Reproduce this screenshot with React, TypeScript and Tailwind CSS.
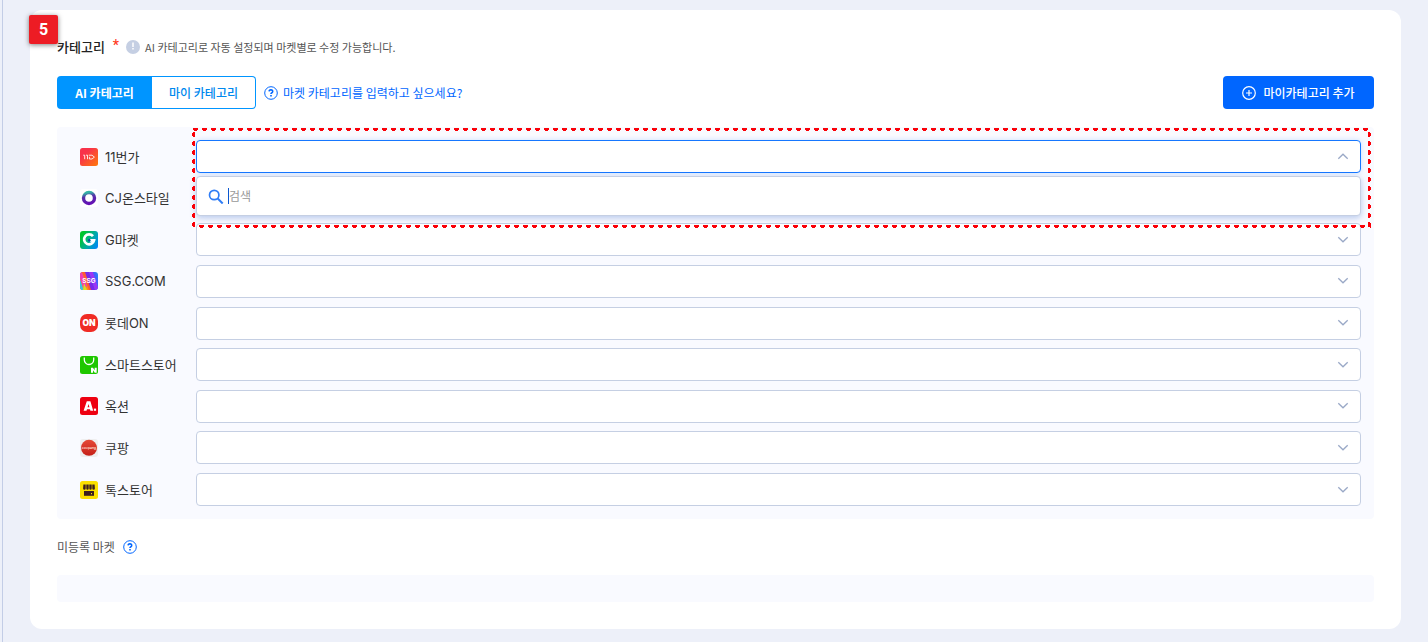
import type { ReactNode } from 'react';

type Market = {
  id: string;
  name: string;
  icon: ReactNode;
};

const markets: Market[] = [
  {
    id: '11st',
    name: '11번가',
    icon: (
      <>
        <defs>
          <linearGradient id="g-11st" x1="0" y1="0" x2="1" y2="1">
            <stop offset="0.3" stopColor="#f8324a" />
            <stop offset="1" stopColor="#ff7a0a" />
          </linearGradient>
        </defs>
        <rect width="18" height="18" rx="2.5" fill="url(#g-11st)" />
        <path d="M3.2 7.2h1.5v4M6 7.2h1.5v4M8.8 7.2h3.2l2.4 1.9L12 11H9.4V8.8" fill="none" stroke="#fff" strokeOpacity="0.85" />
      </>
    ),
  },
  {
    id: 'cj',
    name: 'CJ온스타일',
    icon: (
      <>
        <defs>
          <linearGradient id="g-cj" x1="0.4" y1="0" x2="0.6" y2="1">
            <stop offset="0" stopColor="#35b5a5" />
            <stop offset="0.35" stopColor="#5535a8" />
            <stop offset="1" stopColor="#6510b5" />
          </linearGradient>
        </defs>
        <rect width="18" height="18" rx="3" fill="#fff" />
        <circle cx="9" cy="9" r="5.5" fill="none" stroke="url(#g-cj)" strokeWidth="3.4" />
      </>
    ),
  },
  {
    id: 'gmarket',
    name: 'G마켓',
    icon: (
      <>
        <defs>
          <linearGradient id="g-gm" x1="0" y1="0.2" x2="1" y2="0.8">
            <stop offset="0.1" stopColor="#00c62b" />
            <stop offset="0.6" stopColor="#00a9a8" />
            <stop offset="1" stopColor="#0088f5" />
          </linearGradient>
        </defs>
        <rect width="18" height="18" rx="3" fill="url(#g-gm)" />
        <path d="M13 5.2A5 5 0 1 0 14 9.4H10" fill="none" stroke="#fff" strokeWidth="2.7" />
        <circle cx="9.3" cy="9.2" r="1.3" fill="#0a4ea0" />
      </>
    ),
  },
  {
    id: 'ssg',
    name: 'SSG.COM',
    icon: (
      <>
        <defs>
          <clipPath id="c-ssg">
            <rect width="18" height="18" rx="3" />
          </clipPath>
        </defs>
        <g clipPath="url(#c-ssg)">
          <rect width="18" height="18" fill="#2b7bf5" />
          <path d="M0 0h5l6 18H0z" fill="#ff8b20" />
          <path d="M0 7l3.5 11H0z" fill="#35c5e8" />
          <path d="M0 0h2l5 14-3 4L0 6z" fill="#f03bb5" />
          <path d="M4 11l3 7H3z" fill="#d8e020" />
          <path d="M2 0h4l6 18H9z" fill="#ff5a30" />
          <path d="M5 0h4l6 18h-4z" fill="#7b28e8" />
          <path d="M9 0h4l5 15v3h-3z" fill="#9a35f5" />
          <path d="M13 0h2l3 9v6z" fill="#4060ff" />
        </g>
        <text x="9" y="11.3" textAnchor="middle" fontSize="6.5" fontWeight="700" fill="#fff" fontFamily="Inter, sans-serif">SSG</text>
      </>
    ),
  },
  {
    id: 'lotteon',
    name: '롯데ON',
    icon: (
      <>
        <rect width="18" height="18" rx="7" fill="#f02b25" />
        <text x="9" y="12" textAnchor="middle" fontSize="8.5" fontWeight="900" fill="#fff" fontFamily="Inter, sans-serif">ON</text>
      </>
    ),
  },
  {
    id: 'smartstore',
    name: '스마트스토어',
    icon: (
      <>
        <rect width="18" height="18" rx="2.5" fill="#1fc700" />
        <path d="M4.3 1.5v2.3a4.7 4.7 0 0 0 9.4 0V1.5" fill="none" stroke="#fff" strokeWidth="1.3" />
        <path d="M11 16.8v-5h1.9l1.8 2.5v-2.5h2v5h-1.9L13 14.3v2.5z" fill="#fff" />
      </>
    ),
  },
  {
    id: 'auction',
    name: '옥션',
    icon: (
      <>
        <rect width="18" height="18" rx="2.5" fill="#ee0011" />
        <path d="M6.8 4.2h3.6l2.8 9.6h-2.8l-.4-1.5H7l-.5 1.5H3.6zM8.5 7l-.9 3.2h1.8z" fill="#fff" fillRule="evenodd" />
        <rect x="13.9" y="11.6" width="2.2" height="2.2" fill="#fff" />
      </>
    ),
  },
  {
    id: 'coupang',
    name: '쿠팡',
    icon: (
      <>
        <defs>
          <linearGradient id="g-cp" x1="0" y1="0" x2="0" y2="1">
            <stop offset="0" stopColor="#e54a38" />
            <stop offset="1" stopColor="#c51f18" />
          </linearGradient>
        </defs>
        <rect width="18" height="18" rx="3" fill="#eeeeef" />
        <circle cx="9" cy="8.8" r="8" fill="url(#g-cp)" />
        <text x="9" y="10" textAnchor="middle" fontSize="3.4" fontWeight="600" fill="#ffd8d0" fontFamily="Inter, sans-serif">coupang</text>
      </>
    ),
  },
  {
    id: 'talkstore',
    name: '톡스토어',
    icon: (
      <>
        <rect width="18" height="18" rx="2.5" fill="#fbe000" />
        <path d="M3.4 3.5h2.3v4a1.3 1.3 0 0 1-2.6 0zM6.3 3.5h2.4v4a1.2 1.2 0 0 1-2.4 0zM9.3 3.5h2.4v4a1.2 1.2 0 0 1-2.4 0zM12.3 3.5h2.3l.3 4a1.3 1.3 0 0 1-2.6 0z" fill="#3b1f1f" />
        <path d="M4 10h10v4.8H4z" fill="#3b1f1f" />
        <path d="M11 12h1v1.2h-1z" fill="#fbe000" />
      </>
    ),
  },
];

function QuestionIcon() {
  return (
    <svg className="size-[14px] shrink-0" viewBox="0 0 14 14" fill="none" stroke="#0066ff" aria-hidden="true">
      <circle cx="7" cy="7" r="6.3" strokeWidth="1" />
      <path d="M5.1 5.4a1.8 1.6 0 1 1 2.8 1.4c-.6.4-.9.5-.9 1.2" strokeWidth="1.6" />
      <path d="M7 9v1.6" strokeWidth="1.6" />
    </svg>
  );
}

function Chevron({ up }: { up?: boolean }) {
  return (
    <svg
      className="pointer-events-none absolute right-3 top-1/2 size-3 -translate-y-1/2"
      viewBox="0 0 12 12"
      fill="none"
      stroke="#9aa9c7"
      strokeWidth="1.3"
      aria-hidden="true"
    >
      <path d={up ? 'M1.3 7.8L6 3.2l4.7 4.6' : 'M1.3 3.2L6 7.8l4.7-4.6'} />
    </svg>
  );
}

function SearchMenu() {
  return (
    <div className="absolute inset-x-0 top-[36px] z-10 flex h-10 items-center rounded border border-[#c5cfe3] bg-white pl-[11px] pr-3 shadow-[0_2px_6px_rgba(60,110,200,0.35)]">
      <svg className="size-4 shrink-0" viewBox="0 0 16 16" fill="none" stroke="#2f7df6" aria-hidden="true">
        <circle cx="6.2" cy="7" r="4.7" strokeWidth="1.7" />
        <path d="M9.7 10.5l5 5" strokeWidth="2" />
      </svg>
      <span className="ml-1 h-4 w-px bg-[#0b57d0]" />
      <input
        type="text"
        aria-label="검색"
        placeholder="검색"
        className="min-w-0 flex-1 bg-transparent text-xs leading-5 outline-none placeholder:text-[#999]"
      />
    </div>
  );
}

// guide marker drawn around the opened field
function Highlight() {
  return (
    <svg className="pointer-events-none absolute -left-1 -top-3 z-20 h-[100px] w-[calc(100%+14px)]" fill="none" stroke="#fa0008" aria-hidden="true">
      <g strokeWidth="2" strokeDasharray="5 4">
        <line x1="1" y1="1" x2="100%" y2="1" />
        <line x1="7" y1="98" x2="100%" y2="98" />
        <line x1="2" y1="4" x2="2" y2="100%" />
        <svg x="100%" overflow="visible">
          <line x1="-2" y1="4" x2="-2" y2="100" />
        </svg>
      </g>
      <g strokeWidth="1" strokeDasharray="3 6">
        <line x1="2" y1="2.5" x2="100%" y2="2.5" />
        <line x1="8" y1="99.5" x2="100%" y2="99.5" />
        <line x1="0.5" y1="5" x2="0.5" y2="100%" />
        <svg x="100%" overflow="visible">
          <line x1="-0.5" y1="5" x2="-0.5" y2="100" />
        </svg>
      </g>
    </svg>
  );
}

function MarketRow({ market, open }: { market: Market; open: boolean }) {
  return (
    <li className="flex items-center">
      <label htmlFor={market.id} className="flex w-[116px] shrink-0 items-center gap-[7px] font-[Inter,'Noto_Sans_CJK_KR',sans-serif] text-[13px] leading-5 text-[#333]">
        <svg className="size-[18px] shrink-0" viewBox="0 0 18 18" aria-hidden="true">
          {market.icon}
        </svg>
        {market.name}
      </label>
      <div className="relative min-w-0 flex-1">
        <select
          id={market.id}
          className={
            open
              ? 'block h-[33px] w-full appearance-none rounded border border-[#1677ff] bg-white px-3 shadow-[0_0_5px_rgba(22,119,255,0.2)] outline-none'
              : 'block h-[33px] w-full appearance-none rounded border border-[#c5cfe3] bg-white px-3 outline-none'
          }
        />
        <Chevron up={open} />
        {open && <SearchMenu />}
        {open && <Highlight />}
      </div>
    </li>
  );
}

export default function App() {
  return (
    <div className="min-h-screen bg-[#edf0f9] pl-[2px] font-['Noto_Sans_CJK_KR',sans-serif]">
      <main className="min-h-screen border-l border-[#c3cde6] px-[27px] pb-3 pt-[10px]">
        <section className="relative rounded-xl bg-white p-[27px]">
          <span className="absolute -left-px top-[5px] flex size-[29px] items-center justify-center rounded-xs bg-[#ed1c24] font-[Roboto,sans-serif] text-base font-bold text-white shadow-[0_1px_5px_rgba(0,0,0,0.5)]">
            5
          </span>

          <div className="flex h-5 items-center">
            <h2 className="text-[13px] font-medium leading-5 text-[#222]">카테고리</h2>
            <span className="ml-2 self-start font-[Roboto,sans-serif] text-sm font-medium leading-4 text-[#ff3b1f]">*</span>
            <svg className="ml-[7px] size-[14px]" viewBox="0 0 14 14" aria-hidden="true">
              <circle cx="7" cy="7" r="7" fill="#c5cfe3" />
              <path d="M7 2.5v4.5M7 8v1.5" stroke="#fff" strokeWidth="1.5" />
            </svg>
            <p className="ml-[5px] text-[11px] leading-5 text-[#555]">
              AI 카테고리로 자동 설정되며 마켓별로 수정 가능합니다.
            </p>
          </div>

          <div className="mt-[19px] flex items-center">
            <div className="flex h-[33px] text-xs">
              <button type="button" className="w-[95px] rounded-l bg-[#0095ff] font-bold text-white">
                AI 카테고리
              </button>
              <button type="button" className="w-[104px] rounded-r border border-l-0 border-[#0095ff] bg-white font-medium text-[#0088ee]">
                마이 카테고리
              </button>
            </div>
            <a href="#guide" className="ml-2 flex items-center gap-[5px] text-xs leading-5 text-[#0066ff]">
              <QuestionIcon />
              마켓 카테고리를 입력하고 싶으세요?
            </a>
            <button type="button" className="ml-auto flex h-[33px] w-[151px] items-center justify-center gap-[7px] rounded bg-[#0066ff] text-xs font-medium text-white">
              <svg className="size-[14px]" viewBox="0 0 14 14" fill="none" stroke="currentColor" strokeWidth="1.2" aria-hidden="true">
                <circle cx="7" cy="7" r="6.3" />
                <path d="M7 4v6M4 7h6" />
              </svg>
              마이카테고리 추가
            </button>
          </div>

          <ul className="mt-[18px] flex min-h-[392px] flex-col justify-between rounded bg-[#f9faff] py-[13px] pl-[23px] pr-[13px]">
            {markets.map((market, i) => (
              <MarketRow key={market.id} market={market} open={i === 0} />
            ))}
          </ul>

          <div className="mt-[18px] flex items-center gap-2">
            <h3 className="text-xs leading-5 text-[#555]">미등록 마켓</h3>
            <QuestionIcon />
          </div>
          <div className="mt-[18px] h-[27px] rounded bg-[#f9faff]" />
        </section>
      </main>
    </div>
  );
}
